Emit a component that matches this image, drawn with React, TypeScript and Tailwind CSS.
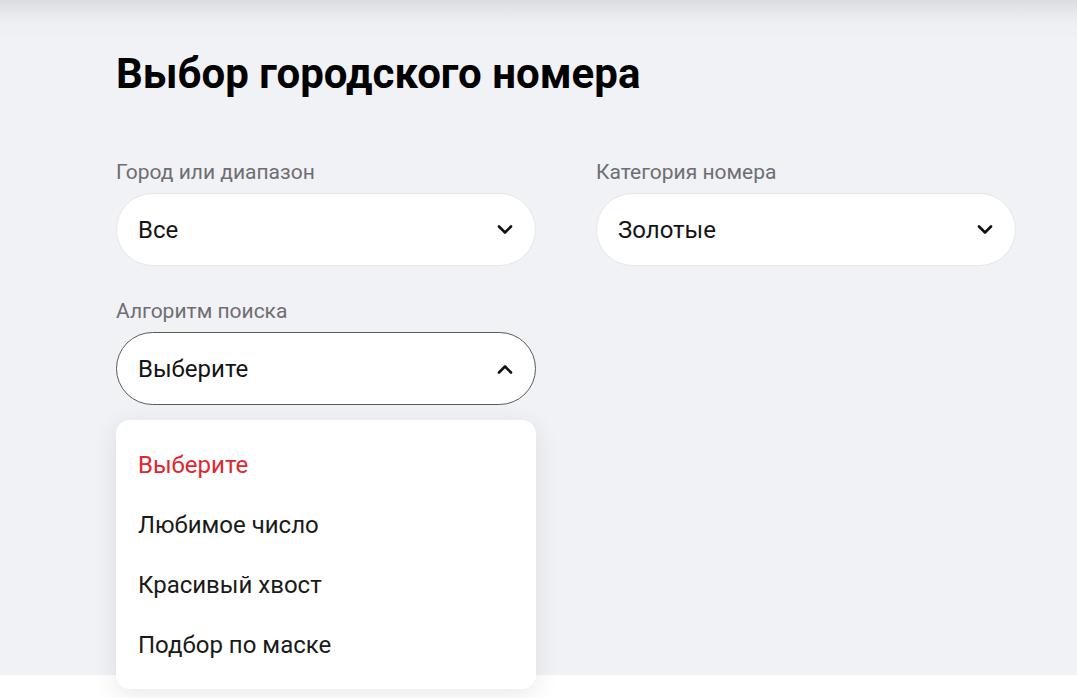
import React from "react";

function Chevron({ up = false }: { up?: boolean }) {
  return (
    <svg width="16" height="10" viewBox="0 0 16 10" fill="none" className="shrink-0">
      <path
        d={up ? "M2 8.5 L8 2.5 L14 8.5" : "M2 1.5 L8 7.5 L14 1.5"}
        stroke="#111"
        strokeWidth="2.6"
        strokeLinecap="round"
        strokeLinejoin="round"
      />
    </svg>
  );
}

function Field({
  label,
  value,
  open = false,
  children,
}: {
  label: string;
  value: string;
  open?: boolean;
  children?: React.ReactNode;
}) {
  return (
    <div className="relative flex flex-col">
      <div className="text-[21px] leading-[24px] text-[#6e6e72] mb-[9px]">{label}</div>
      <div
        className={
          "h-[73px] rounded-full bg-white flex items-center justify-between pl-[21px] pr-[22px] border " +
          (open ? "border-[#5a5a5c]" : "border-[#e6e7eb]")
        }
      >
        <span className="text-[24px] text-[#141414] pt-[1px]">{value}</span>
        <Chevron up={open} />
      </div>
      {children}
    </div>
  );
}

export default function App() {
  const items = ["Выберите", "Любимое число", "Красивый хвост", "Подбор по маске"];
  return (
    <div className="w-[1077px] h-[698px] overflow-hidden bg-white" style={{ fontFamily: "Roboto, 'Noto Sans', sans-serif" }}>
      <section className="h-[675px] bg-[linear-gradient(to_bottom,#dcdde1_0px,#eeeff3_22px,#f1f2f6_40px)] pt-[50px] pl-[116px]">
        <h1 className="text-[42px] leading-[48px] font-bold text-black">Выбор городского номера</h1>
        <div className="grid grid-cols-[420px_420px] gap-x-[60px] gap-y-[33px] mt-[62px] w-[900px]">
          <Field label="Город или диапазон" value="Все" />
          <Field label="Категория номера" value="Золотые" />
          <Field label="Алгоритм поиска" value="Выберите" open>
            <div className="absolute left-0 top-[calc(100%+15px)] w-[420px] h-[269px] bg-white rounded-[14px] shadow-[0_6px_24px_rgba(30,35,60,0.10)] z-10 flex flex-col pt-[15px]">
              {items.map((t, i) => (
                <div
                  key={t}
                  className={
                    "h-[60px] shrink-0 flex items-center pl-[22px] text-[24px] " +
                    (i === 0 ? "text-[#e1262d]" : "text-[#1a1a1a]")
                  }
                >
                  {t}
                </div>
              ))}
            </div>
          </Field>
        </div>
      </section>
    </div>
  );
}
